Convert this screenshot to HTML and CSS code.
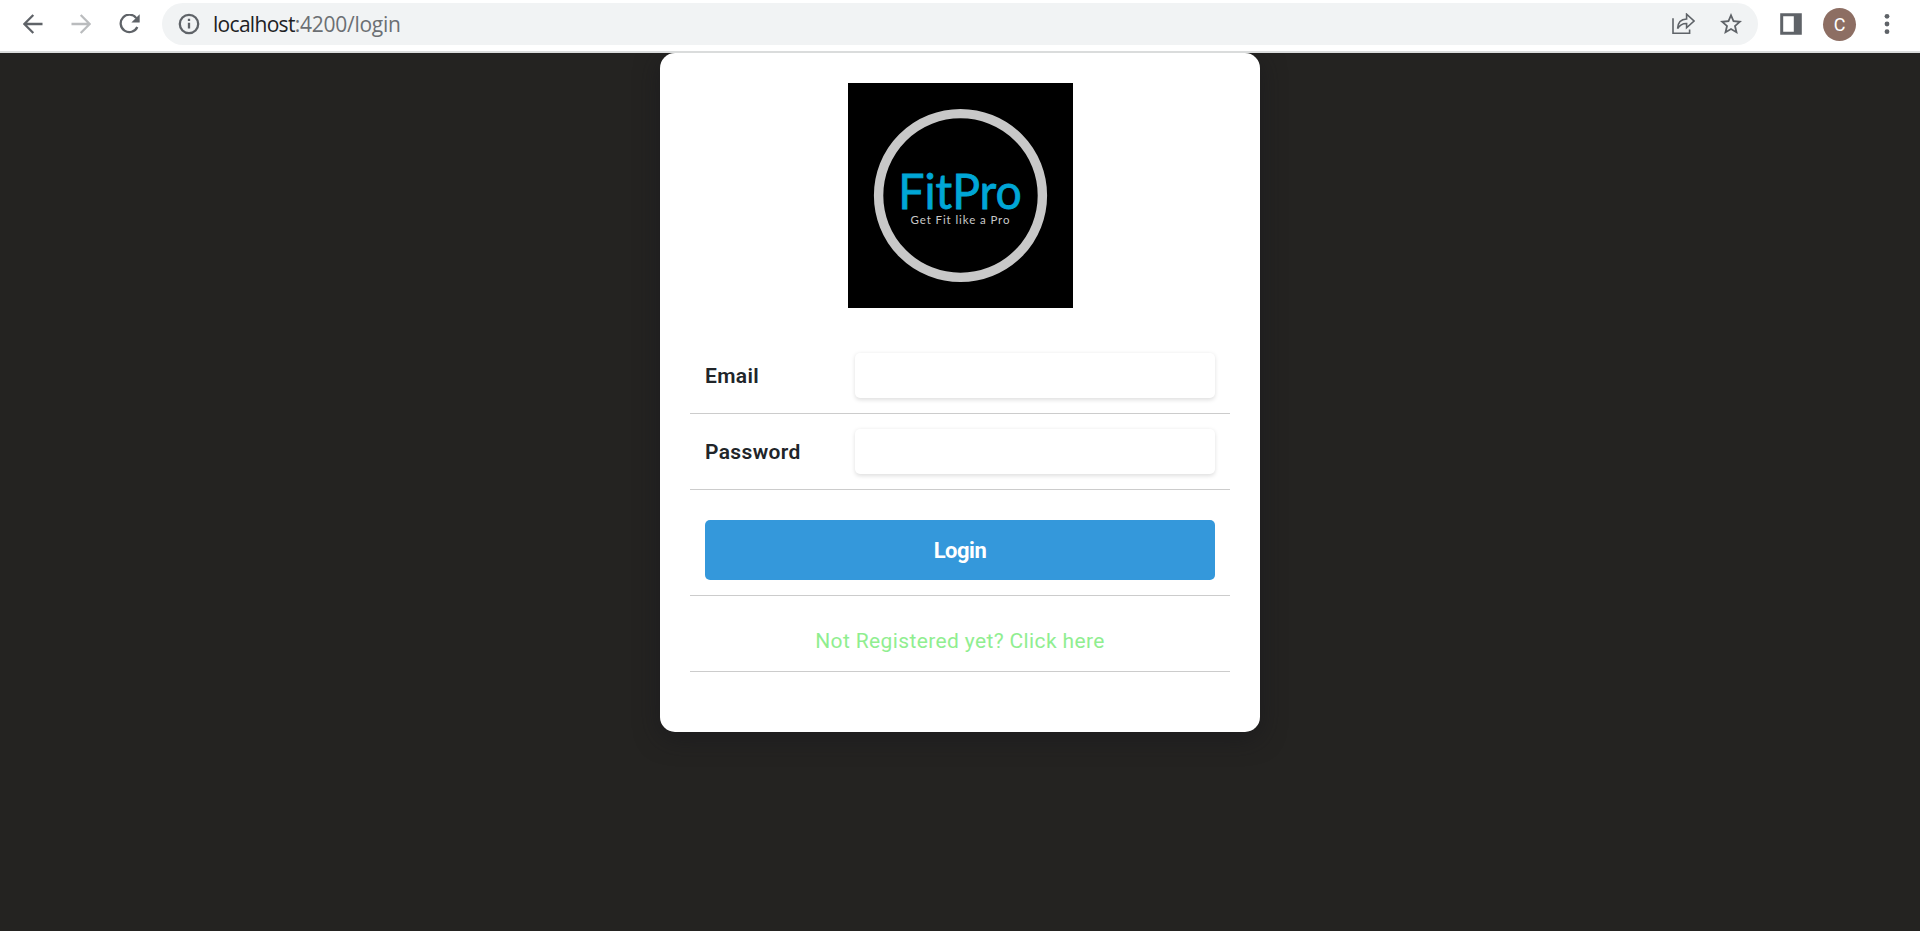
FILE: index.html
```html
<!DOCTYPE html>
<html lang="en">
<head>
<meta charset="utf-8">
<title>FitPro</title>
<link rel="stylesheet" href="styles.css">
</head>
<body>
<header class="toolbar">
  <nav class="nav">
    <svg width="20" height="20" viewBox="0 0 20 20" class="icon"><path d="M19.5 10H1.5M10.3 1L1.3 10l9 9"/></svg>
    <svg width="20" height="20" viewBox="0 0 20 20" class="icon dim"><path d="M.5 10h18M9.7 1l9 9-9 9"/></svg>
    <svg width="22" height="20" viewBox="0 0 22 20" class="icon"><path d="M17.3 4.1A8.7 8.7 0 1 0 18.3 13"/><path class="fill" d="M20.7.3V8.6H12.4Z"/></svg>
  </nav>
  <div class="address">
    <svg width="22" height="22" viewBox="0 0 22 22" class="icon"><circle cx="11" cy="11" r="9.2"/><path d="M11 9.8v5.8M11 5.8v2.3"/></svg>
    <div class="url"><span class="host">localhost</span><span class="path">:4200/login</span></div>
    <div class="actions">
      <svg width="23" height="22" viewBox="0 0 23 22" class="icon thin"><path d="M1 5.3V20.2H17.6V16.5M5.6 15.6C5.8 9.6 9 6.2 14.6 6V1.2L22 8l-7.4 6.8V10.5C10.4 10.4 7.7 12 5.6 15.6Z"/></svg>
      <svg width="22" height="21" viewBox="0 0 22 21" class="fill"><path fill-rule="evenodd" d="M22 8l-7.9-.7L11 0 7.9 7.3 0 8l6 5.2L4.2 21 11 16.9 17.8 21 16 13.2ZM11 14.9l-4.1 2.5 1.1-4.7-3.7-3.2 4.8-.4L11 4.6l1.9 4.5 4.8.4-3.7 3.2 1.1 4.7Z"/></svg>
    </div>
  </div>
  <div class="controls">
    <svg width="22" height="22" viewBox="0 0 22 22" class="fill"><path fill-rule="evenodd" d="M.2.2H21.8V21.8H.2ZM3.2 3.2V18.8H13.8V3.2Z"/></svg>
    <span class="avatar">C</span>
    <svg width="6" height="22" viewBox="0 0 6 22" class="fill"><circle cx="3" cy="3.3" r="2.4"/><circle cx="3" cy="11" r="2.4"/><circle cx="3" cy="18.7" r="2.4"/></svg>
  </div>
</header>
<main class="page">
  <form class="card">
    <svg class="logo" width="225" height="225" viewBox="0 0 225 225">
      <rect width="225" height="225"/>
      <circle class="ring" cx="112.5" cy="112.5" r="81.9"/>
      <text class="brand" x="50.3" y="125.7" textLength="123.5" lengthAdjust="spacingAndGlyphs">FitPro</text>
      <text class="tagline" x="62.5" y="141" textLength="99">Get Fit like a Pro</text>
    </svg>
    <div class="row">
      <label class="label" for="email">Email</label>
      <input class="input" id="email" type="email">
    </div>
    <div class="row">
      <label class="label" for="password">Password</label>
      <input class="input" id="password" type="password">
    </div>
    <div class="row row-button"><button class="button" type="button">Login</button></div>
    <div class="row row-link"><a class="link">Not Registered yet? Click here</a></div>
  </form>
</main>
</body>
</html>
```

FILE: styles.css
```css
* { box-sizing: border-box; }
body {
  margin: 0;
  height: 931px;
  display: flex;
  flex-direction: column;
  overflow: hidden;
  background: #242321;
  font-family: Roboto, "Liberation Sans", sans-serif;
}
.toolbar {
  height: 53px;
  flex: none;
  display: flex;
  align-items: flex-start;
  padding-top: 3px;
  background: #fff;
  border-bottom: 2px solid #dadcdc;
}
.nav {
  width: 162px;
  height: 42px;
  display: flex;
  align-items: center;
  gap: 28px;
  padding-left: 23px;
}
.icon { fill: none; stroke: #5f6368; stroke-width: 2.3; }
.icon.dim { stroke: #babcbe; }
.icon.thin { stroke-width: 1.6; }
.icon .fill { fill: #5f6368; stroke: none; }
.fill { fill: #5f6368; }
.address {
  width: 1596px;
  height: 42px;
  display: flex;
  align-items: center;
  padding: 0 16px;
  border-radius: 21px;
  background: #f1f3f4;
}
.url {
  flex: 1;
  padding-left: 13px;
  font: 21px/42px "Open Sans", sans-serif;
  letter-spacing: -0.7px;
  color: #202124;
}
.path { letter-spacing: -0.25px; color: #6b6f73; }
.actions { display: flex; gap: 25px; }
.controls {
  height: 42px;
  display: flex;
  align-items: center;
  padding-left: 22px;
}
.avatar {
  width: 33px;
  height: 33px;
  margin: 0 28px 0 21px;
  border-radius: 50%;
  background: #8d6e63;
  color: #fff;
  font-size: 18px;
  line-height: 34px;
  text-align: center;
}
.page {
  flex: 1;
  display: flex;
  justify-content: center;
  align-items: flex-start;
  overflow: hidden;
}
.card {
  width: 600px;
  height: 679px;
  padding: 30px;
  border-radius: 15px;
  background: #fff;
  box-shadow: 0 6px 24px rgba(23, 23, 28, 0.6);
}
.logo { display: block; margin: 0 auto 30px; }
.ring { fill: none; stroke: #c8c8c8; stroke-width: 9.4; }
.brand { font: 49px Lato, sans-serif; fill: #00a6d6; stroke: #00a6d6; stroke-width: .8; }
.tagline { font: 11.5px Lato, sans-serif; fill: #c8c8c8; }
.row {
  height: 76px;
  display: flex;
  align-items: center;
  padding: 0 15px;
  border-bottom: 1px solid #ccc;
}
.label {
  width: 150px;
  font-size: 21px;
  font-weight: 600;
  letter-spacing: 0.35px;
  color: #212529;
}
.input {
  width: 360px;
  height: 45px;
  border: 0;
  border-radius: 5px;
  background: #fff;
  box-shadow: 0 1.5px 4px rgba(0, 0, 0, 0.13);
}
.row-button { height: 106px; padding-top: 15px; }
.button {
  width: 100%;
  height: 60px;
  border: 0;
  border-radius: 5px;
  background: #3498db;
  color: #fff;
  font: 700 22px Roboto, sans-serif;
  letter-spacing: -0.5px;
}
.row-link { justify-content: center; padding-top: 15px; }
.link { font-size: 21px; letter-spacing: .37px; color: #90ee90; }
```
